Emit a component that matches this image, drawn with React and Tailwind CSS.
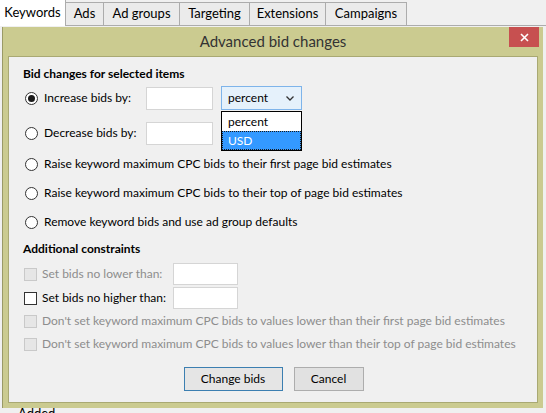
import { useState } from 'react';

const tabs = [
  { label: 'Keywords', w: 'w-[66px]' },
  { label: 'Ads', w: 'w-[38px]' },
  { label: 'Ad groups', w: 'w-[76px]' },
  { label: 'Targeting', w: 'w-[70px]' },
  { label: 'Extensions', w: 'w-[76px]' },
  { label: 'Campaigns', w: 'w-[81px]' },
];

const Radio = ({ checked }) => (
  <span className="w-[13px] h-[13px] rounded-full border border-[#333] bg-white flex items-center justify-center shrink-0">
    {checked && <span className="w-[7px] h-[7px] rounded-full bg-[#1a1a1a]" />}
  </span>
);

const Check = ({ disabled }) => (
  <span
    className={
      disabled
        ? 'w-[13px] h-[13px] border border-[#c9c9c9] bg-[#e6e6e6] shrink-0'
        : 'w-[13px] h-[13px] border border-[#333] bg-white shrink-0'
    }
  />
);

const Field = ({ className }) => (
  <span className={'border border-[#d5d5d5] bg-white block ' + className} />
);

const RadioRow = ({ label, checked, mt, children }) => (
  <div className={'flex items-center h-[24px] pl-[16px] ' + mt}>
    <Radio checked={checked} />
    <span className="ml-[6px]">{label}</span>
    {children}
  </div>
);

const CheckRow = ({ label, disabled, mt, children }) => (
  <div className={'flex items-center h-[22px] pl-[15px] ' + mt}>
    <Check disabled={disabled} />
    <span className={disabled ? 'ml-[5px] text-[#8d8d8d]' : 'ml-[5px] text-black'}>{label}</span>
    {children}
  </div>
);

export default function App() {
  const [active] = useState(0);

  return (
    <div
      className="relative w-[546px] h-[413px] overflow-hidden bg-[#f0f0f0] text-[12px] text-black"
      style={{ fontFamily: '"Segoe UI", Lato, "Liberation Sans", sans-serif' }}
    >
      {/* tab strip behind the dialog */}
      <div className="flex items-end h-[26px] border-b border-[#acacac] text-[13px]">
        {tabs.map((t, i) => (
          <div
            key={t.label}
            className={
              i === active
                ? t.w + ' h-[26px] flex items-center justify-center bg-white border-r border-[#acacac] -mb-px'
                : t.w + ' h-[23px] flex items-center justify-center bg-[#ebebeb] border-t border-r border-[#acacac]'
            }
          >
            {t.label}
          </div>
        ))}
      </div>
      <div className="pl-[18px] pt-[381px] text-[13px] leading-none">Added</div>

      {/* dialog */}
      <div className="absolute left-[2px] top-[27px] w-[541px] h-[381px] bg-[#cbcb90] border-l border-[#9a9a66] flex flex-col">
        <div className="relative h-[29px] flex items-center justify-center text-[15px] text-[#333]">
          Advanced bid changes
          <div className="absolute right-[4px] top-0 w-[30px] h-[20px] bg-[#c75050] flex items-center justify-center">
            <svg width="9" height="9" viewBox="0 0 9 9">
              <path d="M1 1 L8 8 M8 1 L1 8" stroke="white" strokeWidth="1.6" />
            </svg>
          </div>
        </div>

        <div className="relative mx-[5px] mb-[5px] flex-1 bg-[#f0f0f0] border border-[#a9a973] flex flex-col">
          <div className="h-[18px] mt-[8px] pl-[14px] flex items-center font-bold">
            Bid changes for selected items
          </div>

          <RadioRow label="Increase bids by:" checked mt="mt-[3px]">
            <Field className="absolute left-[137px] w-[67px] h-[23px]" />
            <div className="absolute left-[212px] top-[29px] w-[81px] h-[24px] border border-[#7eb4ea] bg-[#e5f1fb] flex items-center pl-[6px]">
              percent
              <svg className="ml-auto mr-[7px]" width="8" height="5" viewBox="0 0 8 5">
                <path d="M0.5 0.5 L4 4 L7.5 0.5" stroke="#333" strokeWidth="1.3" fill="none" />
              </svg>
            </div>
          </RadioRow>

          <RadioRow label="Decrease bids by:" mt="mt-[11px]">
            <Field className="absolute left-[137px] w-[67px] h-[23px]" />
          </RadioRow>

          <RadioRow label="Raise keyword maximum CPC bids to their first page bid estimates" mt="mt-[7px]" />
          <RadioRow label="Raise keyword maximum CPC bids to their top of page bid estimates" mt="mt-[5px]" />
          <RadioRow label="Remove keyword bids and use ad group defaults" mt="mt-[5px]" />

          <div className="h-[18px] mt-[6px] pl-[14px] flex items-center font-bold">Additional constraints</div>

          <CheckRow label="Set bids no lower than:" disabled mt="mt-[5px]">
            <Field className="absolute left-[164px] w-[65px] h-[22px]" />
          </CheckRow>
          <CheckRow label="Set bids no higher than:" mt="mt-[2px]">
            <Field className="absolute left-[164px] w-[65px] h-[22px]" />
          </CheckRow>
          <CheckRow
            label="Don't set keyword maximum CPC bids to values lower than their first page bid estimates"
            disabled
            mt="mt-[1px]"
          />
          <CheckRow
            label="Don't set keyword maximum CPC bids to values lower than their top of page bid estimates"
            disabled
            mt="mt-[1px]"
          />

          <div className="mt-[12px] flex justify-center gap-[11px] pl-[1px]">
            <button className="w-[99px] h-[24px] border border-[#3c7fb1] bg-[#e5e5e5]">Change bids</button>
            <button className="w-[70px] h-[24px] border border-[#adadad] bg-[#e1e1e1]">Cancel</button>
          </div>

          {/* open dropdown list */}
          <div className="absolute left-[212px] top-[54px] w-[81px] h-[40px] border border-black bg-white flex flex-col">
            <div className="h-[19px] flex items-center pl-[6px]">percent</div>
            <div className="h-[19px] flex items-center pl-[5px] bg-[#3399ff] text-white border border-dotted border-[#1a1a1a]">
              USD
            </div>
          </div>
        </div>
      </div>
    </div>
  );
}
